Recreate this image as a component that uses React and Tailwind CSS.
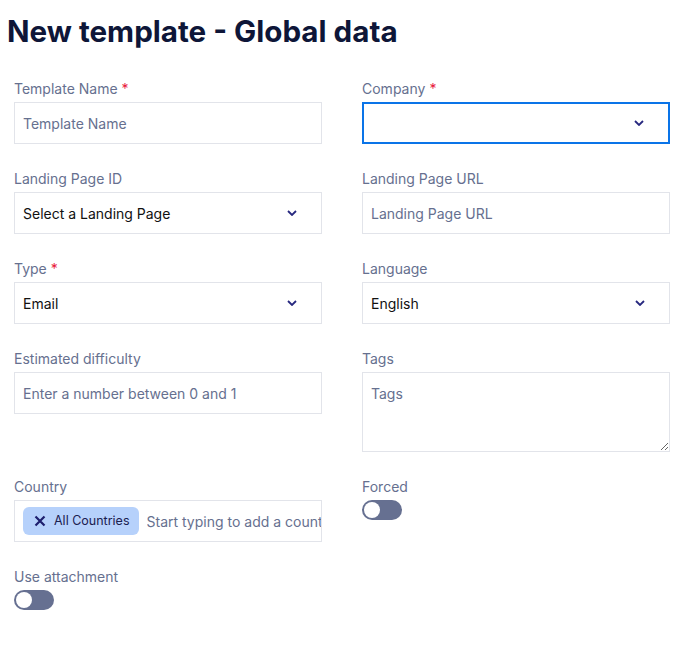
import { useState } from 'react';

const labelCls = 'block text-[14px] leading-5 text-[#66708f] mb-[3px]';
const boxCls = 'w-full h-[42px] border border-[#e2e4ea] bg-white px-[8px] text-[14px] text-[#111] outline-none';

function Label({ children, required }) {
  return (
    <label className={labelCls}>
      {children}
      {required && <span className="text-[#e8193c] ml-1">*</span>}
    </label>
  );
}

function Chevron() {
  return (
    <svg className="w-[10px] h-[6px] text-[#27287f]" viewBox="0 0 10 6" fill="none" stroke="currentColor" strokeWidth="1.8">
      <path d="M1 1l4 4 4-4" />
    </svg>
  );
}

function SelectBox({ value, focused }) {
  return (
    <div
      className={`w-full h-[42px] bg-white flex items-center justify-between pl-[8px] pr-[24px] text-[14px] text-[#111] ${
        focused ? 'border-2 border-[#0a74e8]' : 'border border-[#e2e4ea]'
      }`}
    >
      <span>{value}</span>
      <Chevron />
    </div>
  );
}

function Toggle() {
  const [on, setOn] = useState(false);
  return (
    <button
      onClick={() => setOn(!on)}
      className={`relative w-[40px] h-[20px] rounded-full ${on ? 'bg-[#0a74e8]' : 'bg-[#667091]'}`}
    >
      <span
        className={`absolute top-[2px] w-[16px] h-[16px] rounded-full bg-white ${on ? 'left-[22px]' : 'left-[2px]'}`}
      />
    </button>
  );
}

export default function App() {
  return (
    <div className="bg-white min-h-screen font-['Inter',sans-serif] pl-[14px] pr-[20px] pt-[13px]">
      <h1 className="-ml-[7px] text-[29.6px] leading-9 font-bold text-[#0e1638] mb-[30px]">
        New template - Global data
      </h1>

      <div className="grid grid-cols-2 gap-x-[40px]">
        {/* row 1 */}
        <div className="mb-[25px]">
          <Label required>Template Name</Label>
          <input className={`${boxCls} placeholder:text-[#66708f]`} placeholder="Template Name" />
        </div>
        <div className="mb-[25px]">
          <Label required>Company</Label>
          <SelectBox value="" focused />
        </div>

        {/* row 2 */}
        <div className="mb-[25px]">
          <Label>Landing Page ID</Label>
          <SelectBox value="Select a Landing Page" />
        </div>
        <div className="mb-[25px]">
          <Label>Landing Page URL</Label>
          <input className={`${boxCls} placeholder:text-[#66708f]`} placeholder="Landing Page URL" />
        </div>

        {/* row 3 */}
        <div className="mb-[25px]">
          <Label required>Type</Label>
          <SelectBox value="Email" />
        </div>
        <div className="mb-[25px]">
          <Label>Language</Label>
          <SelectBox value="English" />
        </div>

        {/* row 4 */}
        <div className="mb-[25px]">
          <Label>Estimated difficulty</Label>
          <input
            className={`${boxCls} placeholder:text-[#66708f]`}
            placeholder="Enter a number between 0 and 1"
          />
        </div>
        <div className="mb-[25px]">
          <Label>Tags</Label>
          <textarea
            className="block w-full h-[80px] border border-[#e2e4ea] bg-white px-[8px] py-[11px] text-[14px] leading-5 outline-none placeholder:text-[#66708f]"
            placeholder="Tags"
          />
        </div>

        {/* row 5 */}
        <div className="mb-[25px]">
          <Label>Country</Label>
          <div className="w-full h-[42px] border border-[#e2e4ea] bg-white flex items-center pl-[8px] gap-[8px] overflow-hidden">
            <span className="shrink-0 h-[28px] flex items-center gap-[8px] rounded-[6px] bg-[#b6d1fb] pl-[11px] pr-[9px] text-[12.5px] text-[#1b2050]">
              <svg className="w-[12px] h-[12px] text-[#1e1f6e]" viewBox="0 0 12 12" fill="none" stroke="currentColor" strokeWidth="2.2">
                <path d="M1.5 1.5l9 9M10.5 1.5l-9 9" />
              </svg>
              All Countries
            </span>
            <input
              className="flex-1 min-w-0 h-full text-[14px] outline-none placeholder:text-[#66708f]"
              placeholder="Start typing to add a country"
            />
          </div>
        </div>
        <div className="mb-[25px]">
          <Label>Forced</Label>
          <Toggle />
        </div>

        {/* row 6 */}
        <div>
          <Label>Use attachment</Label>
          <Toggle />
        </div>
      </div>
    </div>
  );
}
